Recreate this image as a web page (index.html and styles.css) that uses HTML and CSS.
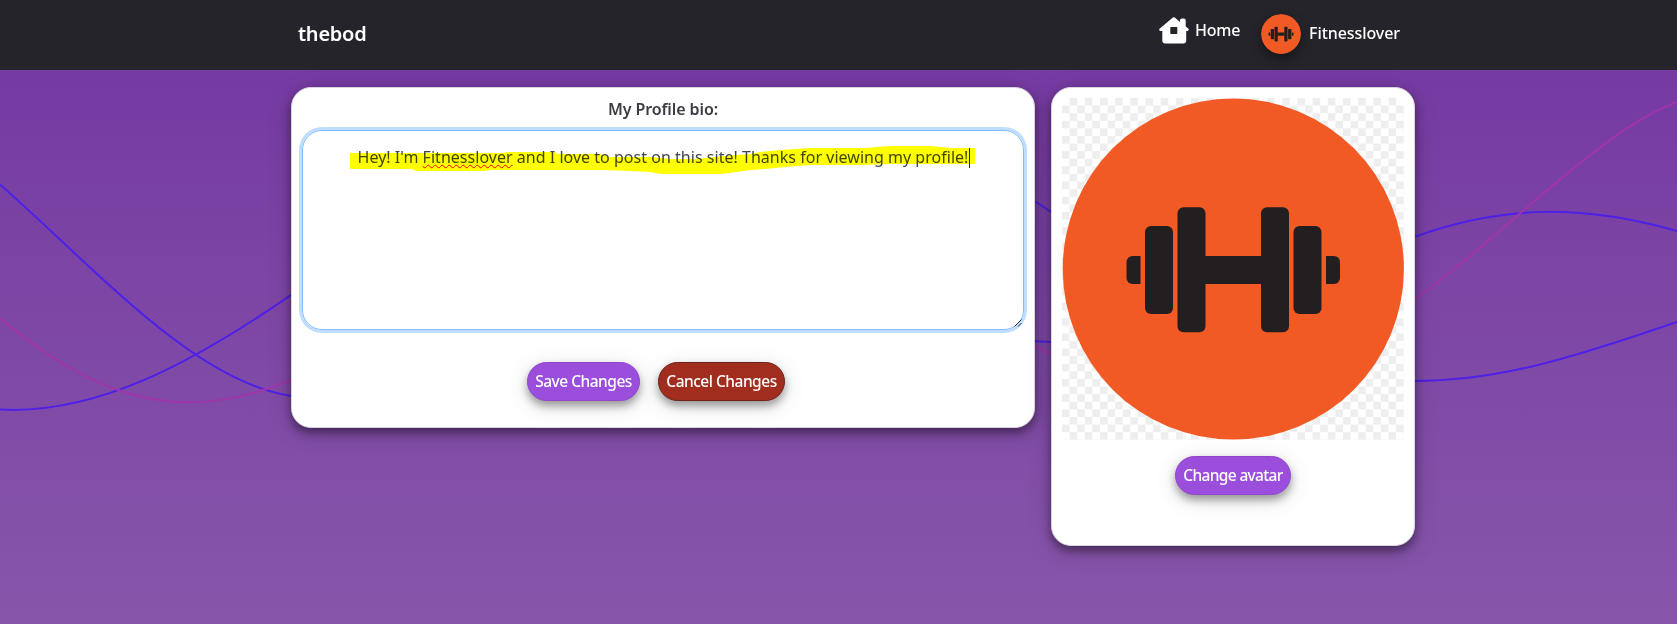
FILE: index.html
```html
<!DOCTYPE html>
<html lang="en">
<head>
<meta charset="utf-8">
<title>thebod</title>
<link rel="stylesheet" href="styles.css">
</head>
<body>
<svg width="0" height="0" class="defs" aria-hidden="true">
  <symbol id="dumbbell" viewBox="0 0 342 342">
    <circle cx="171.300" cy="171" r="170.600" fill="#f15a24"/>
    <g fill="#231f20">
      <path d="M78.500 158v28h-8a6 6 0 0 1-6-6v-16a6 6 0 0 1 6-6z"/>
      <rect x="83" y="128" width="28" height="88" rx="6"/>
      <rect x="115.500" y="109.300" width="28" height="125" rx="6"/>
      <rect x="140" y="158" width="62" height="28"/>
      <rect x="199" y="109.300" width="28" height="125" rx="6"/>
      <rect x="231.500" y="128" width="28" height="88" rx="6"/>
      <path d="M264 158v28h8a6 6 0 0 0 6-6v-16a6 6 0 0 0-6-6z"/>
    </g>
  </symbol>
</svg>
<nav class="navbar">
  <div class="container nav-inner">
    <a class="brand">thebod</a>
    <div class="nav-links">
      <a class="home"><svg class="home-icon" viewBox="0 0 30 27"><path fill="#fff" fill-rule="evenodd" d="M14.200.3Q15 0 15.800.6L21 5V3.300q0-1.800 2-1.800h1.700q2 0 2 1.800v6.200l2.800 2.300q.8 1.800-1 2.200h-1.300v9.500q0 3-3 3H6.300q-3 0-3-3V14H1.500q-2-.4-1-2.200zM12 10q-.7 0-.7.700v5.600q0 .7.700.7h5.600q.7 0 .7-.7v-5.600q0-.7-.7-.7z"/></svg><span class="home-label">Home</span></a>
      <a class="user"><svg class="avatar"><use href="#dumbbell"/></svg><span class="user-label">Fitnesslover</span></a>
    </div>
  </div>
</nav>
<main class="page">
  <svg class="waves" viewBox="0 0 1677 554" fill="none" stroke-width="2">
    <g stroke="#4b20e8">
      <path d="M0 114.500C97 200 194 311 291 326"/>
      <path d="M0 339.500C97 345 194 292 291 225"/>
      <path d="M1030 128L1052 142.500M1030 271L1052 272"/>
      <path d="M1414 167C1507 133 1588 136 1677 161"/>
      <path d="M1414 311C1500 311 1575 287 1677 252"/>
    </g>
    <g stroke="#a035aa">
      <path d="M0 248.500C106 337 190 352 291 310"/>
      <path d="M1030 273L1052 285"/>
      <path d="M1414 229.500C1502 168 1597 62 1677 32"/>
    </g>
  </svg>
  <div class="container columns">
    <section class="card bio-card">
      <h1 class="title"><span class="title-text">My Profile bio:</span></h1>
      <div class="bio">
        <svg class="marker" viewBox="0 0 626 32"><path fill="#ff0" d="M0 8H154L156 7H205L207 9H250L260 12H300L320 14H345L365 12L385 10L400 9L410 7L430 5L460 3H515L540 1H580L600 3H625V19H540L510 20H460L435 22L415 24L400 25L380 28L370 29H310L300 27L280 26L255 25H140L135 26H66L62 24H0z"/></svg>
        <p class="bio-text">Hey! I'm <span class="misspelled">Fitnesslover</span> and I love to post on this site! Thanks for viewing my profile!</p>
        <span class="caret"></span>
        <svg class="grip" viewBox="0 0 8 8"><path d="M.5 7.500l7-7M4 7.500L7.500 4" stroke="#333" stroke-width="1"/></svg>
      </div>
      <div class="actions">
        <button class="btn save"><span>Save Changes</span></button>
        <button class="btn cancel"><span>Cancel Changes</span></button>
      </div>
    </section>
    <section class="card avatar-card">
      <div class="checker"><svg class="picture"><use href="#dumbbell"/></svg></div>
      <button class="btn change"><span>Change avatar</span></button>
    </section>
  </div>
</main>
</body>
</html>
```
FILE: styles.css
```css
* { box-sizing: border-box; }
body {
  margin: 0;
  height: 624px;
  overflow: hidden;
  font: 16px/24px "Noto Sans", sans-serif;
  background: #8455a8;
}
.defs { position: absolute; }
.container { width: 1124px; margin-left: 291px; }
.navbar { height: 70px; background: #25242a; color: #fff; }
.nav-inner { display: flex; justify-content: space-between; padding: 0 14px 0 7px; }
.brand { font-size: 20px; font-weight: 600; line-height: 67px; letter-spacing: -0.25px; }
.nav-links { display: flex; gap: 21px; }
.home, .user { display: flex; align-items: flex-start; font-weight: 500; }
.home-icon { width: 30px; height: 27px; margin-top: 17px; }
.home-label { margin: 18px 0 0 6px; width: 45px; letter-spacing: -0.2px; }
.avatar { width: 40px; height: 40px; margin-top: 14px; border-radius: 50%; box-shadow: 0 5px 12px rgba(0,0,0,.4); }
.user-label { margin: 21px 0 0 8px; width: 92px; letter-spacing: -0.07px; }
.page {
  position: relative;
  height: 554px;
  background: linear-gradient(#763aa2, #8756aa);
}
.waves { position: absolute; inset: 0; width: 1677px; height: 554px; }
.columns { position: relative; display: flex; align-items: flex-start; gap: 16px; padding-top: 17px; }
.card {
  background: #fff;
  border: 1px solid #d9d3de;
  border-radius: 20px;
  box-shadow: 0 5px 10px rgba(0,0,0,.4), 0 5px 25px rgba(0,0,0,.16);
}
.bio-card { width: 744px; height: 341px; padding: 10px; }
.title { margin: 0; height: 32px; text-align: center; font-size: 16px; line-height: 23px; font-weight: 600; letter-spacing: -0.1px; color: #3c3c44; }
.bio {
  position: relative;
  height: 200px;
  border: 1px solid #80bdff;
  border-radius: 20px;
  box-shadow: 0 0 0 3px #bfdeff;
  padding: 15px 0;
}
.marker { position: absolute; left: 47px; top: 14px; width: 626px; height: 32px; }
.bio-text { position: relative; margin: 0; text-align: center; letter-spacing: 0.025px; line-height: 23px; color: #40464d; white-space: nowrap; mix-blend-mode: multiply; }
.misspelled { text-decoration: underline wavy #f00 1px; text-underline-offset: 1px; text-decoration-skip-ink: none; }
.caret { position: absolute; left: 666px; top: 17px; width: 1px; height: 20px; background: #222; }
.grip { position: absolute; right: 1px; bottom: 2px; width: 8px; height: 8px; }
.actions { display: flex; justify-content: center; gap: 18px; margin-top: 32px; padding-right: 14px; }
.btn {
  display: block;
  height: 39px;
  padding: 0;
  border: 1px solid #9147cc;
  border-radius: 20px;
  background: #9b4ddb;
  color: #fff;
  font: 500 15.500px/34px "Noto Sans", sans-serif;
  letter-spacing: -0.5px;
  text-align: center;
  white-space: nowrap;
  box-shadow: 0 5px 8px rgba(0,0,0,.35), 0 5px 25px rgba(0,0,0,.12);
}
.btn span { display: block; height: 36px; }
.save { width: 113px; }
.cancel { width: 127px; background: #a12d1f; border-color: #6f2219; }
.avatar-card { width: 364px; height: 459px; padding: 10px; }
.checker {
  height: 342px;
  background: repeating-conic-gradient(#eee 0 25%, #fff 0 50%) 0 0 / 15.200px 15.200px;
}
.picture { display: block; width: 342px; height: 342px; }
.change { width: 116px; margin: 16px auto 0; letter-spacing: -0.65px; }
```
